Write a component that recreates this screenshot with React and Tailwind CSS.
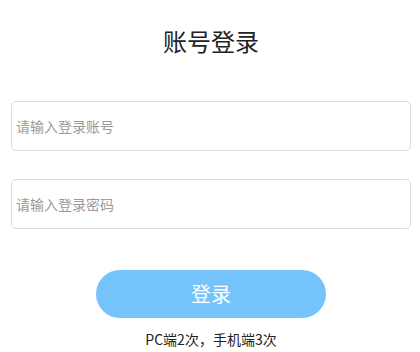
export default function App() {
  return (
    <div
      className="w-[420px] h-[352px] bg-white flex flex-col items-center pl-[2px] overflow-hidden"
      style={{ fontFamily: '"Microsoft YaHei", "Noto Sans CJK SC", "Noto Sans", sans-serif' }}
    >
      {/* 标题 */}
      <h1 className="mt-[25px] text-[24px] leading-[32px] font-normal text-[#222]">账号登录</h1>

      {/* 表单 */}
      <input
        type="text"
        placeholder="请输入登录账号"
        className="mt-[44px] w-[400px] h-[50px] px-[4px] rounded-[5px] border border-[#dcdcdc] bg-white text-[14px] text-[#333] placeholder:text-[#9a9a9a] focus:outline-none"
      />
      <input
        type="password"
        placeholder="请输入登录密码"
        className="mt-[28px] w-[400px] h-[50px] px-[4px] rounded-[5px] border border-[#dcdcdc] bg-white text-[14px] text-[#333] placeholder:text-[#9a9a9a] focus:outline-none"
      />

      <button
        type="button"
        className="mt-[41px] w-[230px] h-[48px] rounded-full bg-[#74c4fb] text-white text-[20px] leading-none"
      >
        登录
      </button>

      <p className="mt-[11px] text-[14px] leading-[20px] text-[#222]">PC端2次，手机端3次</p>
    </div>
  )
}
